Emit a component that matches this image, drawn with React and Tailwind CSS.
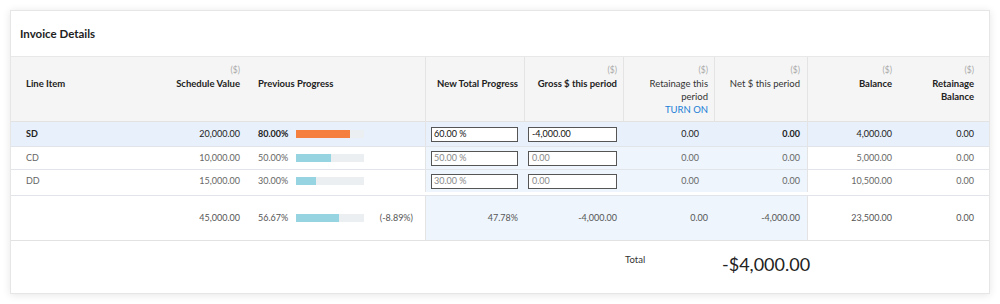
import React from 'react';

const cols = 'grid grid-cols-[139px_98px_177px_99px_99px_91px_93px_93px_89px]';

const rows = [
    { name: 'SD', value: '20,000.00', prev: '80.00%', pct: 80, bar: 'bg-[#f57f3f]', ntp: '60.00 %', gross: '-4,000.00', ret: '0.00', net: '0.00', bal: '4,000.00', rb: '0.00', active: true, h: 'h-[25px]' },
    { name: 'CD', value: '10,000.00', prev: '50.00%', pct: 51, bar: 'bg-[#96d4e1]', ntp: '50.00 %', gross: '0.00', ret: '0.00', net: '0.00', bal: '5,000.00', rb: '0.00', h: 'h-[23px]' },
    { name: 'DD', value: '15,000.00', prev: '30.00%', pct: 30, bar: 'bg-[#96d4e1]', ntp: '30.00 %', gross: '0.00', ret: '0.00', net: '0.00', bal: '10,500.00', rb: '0.00', h: 'h-[26px] pb-[3px]' },
];

const Dollar = () => <div className="text-[8.5px] font-normal text-[#a9a9a9]">($)</div>;

const Bar = ({ pct, color }) => (
    <div className="w-[68px] h-[8px] bg-[#eceff2]">
        <div className={`h-full ${color}`} style={{ width: `${pct}%` }} />
    </div>
);

const HeaderRow = () => (
    <div className={`${cols} h-[65px] bg-[#f5f5f5] border-b border-[#e2e2e2] text-[9.5px] font-bold text-[#222] leading-[13px]`}>
        <div className="pl-[15px] pt-[7px]">
            <div>&nbsp;</div>
            <div>Line Item</div>
        </div>
        <div className="pr-[8px] pt-[7px] text-right">
            <Dollar />
            <div>Schedule Value</div>
        </div>
        <div className="pl-[10px] pt-[7px]">
            <div>&nbsp;</div>
            <div>Previous Progress</div>
        </div>
        <div className="border-l border-[#e4e4e4] pr-[6px] pt-[7px] text-right">
            <div>&nbsp;</div>
            <div>New Total Progress</div>
        </div>
        <div className="border-l border-[#e4e4e4] pr-[6px] pt-[7px] text-right">
            <Dollar />
            <div>Gross $ this period</div>
        </div>
        <div className="border-l border-[#e4e4e4] pr-[6px] pt-[7px] text-right font-normal text-[#333]">
            <Dollar />
            <div>Retainage this</div>
            <div>period</div>
            <div className="text-[#1b7fd6]">TURN ON</div>
        </div>
        <div className="border-l border-[#e4e4e4] pr-[7px] pt-[7px] text-right font-normal text-[#333]">
            <Dollar />
            <div>Net $ this period</div>
        </div>
        <div className="border-l border-[#e4e4e4] pr-[8px] pt-[7px] text-right">
            <Dollar />
            <div>Balance</div>
        </div>
        <div className="pr-[15px] pt-[7px] text-right">
            <Dollar />
            <div>Retainage</div>
            <div>Balance</div>
        </div>
    </div>
);

const BodyRow = ({ r }) => {
    const rowBg = r.active ? 'bg-[#e7f0fb]' : 'bg-white';
    const midBg = r.active ? 'bg-[#e7f0fb]' : 'bg-[#eef5fd]';
    const txt = r.active ? 'text-[#222]' : 'text-[#666]';
    return (
        <div className={`${cols} ${r.h} ${rowBg} ${txt} border-b border-[#e1e5ea] text-[9px]`}>
            <div className={`pl-[15px] flex items-center ${r.active ? 'font-bold' : ''}`}>{r.name}</div>
            <div className="pr-[8px] flex items-center justify-end">{r.value}</div>
            <div className="pl-[10px] flex items-center">
                <span className={`w-[38px] ${r.active ? 'font-bold' : ''}`}>{r.prev}</span>
                <Bar pct={r.pct} color={r.bar} />
            </div>
            <div className={`${midBg} border-l border-[#e4e4e4] pl-[5px] flex items-center`}>
                <div className={`w-[87px] h-[15px] border border-[#555] bg-white px-[2px] flex items-center ${r.active ? 'text-[#111]' : 'text-[#888]'}`}>{r.ntp}</div>
            </div>
            <div className={`${midBg} pl-[4px] flex items-center`}>
                <div className={`w-[89px] h-[15px] border border-[#555] bg-white px-[3px] flex items-center ${r.active ? 'text-[#111]' : 'text-[#888]'}`}>{r.gross}</div>
            </div>
            <div className={`${midBg} pr-[15px] flex items-center justify-end`}>{r.ret}</div>
            <div className={`${midBg} pr-[7px] flex items-center justify-end ${r.active ? 'font-bold' : ''}`}>{r.net}</div>
            <div className="border-l border-[#e4e4e4] pr-[8px] flex items-center justify-end">{r.bal}</div>
            <div className="pr-[15px] flex items-center justify-end">{r.rb}</div>
        </div>
    );
};

const TotalsRow = () => (
    <div className={`${cols} h-[45px] border-b border-[#e2e2e2] text-[9px] text-[#555]`}>
        <div />
        <div className="pr-[8px] flex items-center justify-end">45,000.00</div>
        <div className="pl-[10px] pr-[12px] flex items-center">
            <span className="w-[38px]">56.67%</span>
            <Bar pct={63} color="bg-[#96d4e1]" />
            <span className="ml-auto">(-8.89%)</span>
        </div>
        <div className="bg-[#eef5fd] border-l border-[#e4e4e4] pr-[6px] flex items-center justify-end">47.78%</div>
        <div className="bg-[#eef5fd] pr-[6px] flex items-center justify-end">-4,000.00</div>
        <div className="bg-[#eef5fd] pr-[6px] flex items-center justify-end">0.00</div>
        <div className="bg-[#eef5fd] pr-[7px] flex items-center justify-end">-4,000.00</div>
        <div className="border-l border-[#e4e4e4] pr-[8px] flex items-center justify-end">23,500.00</div>
        <div className="pr-[15px] flex items-center justify-end">0.00</div>
    </div>
);

const App = () => {
    return (
        <div className="w-[1000px] h-[304px] bg-white pt-[10px] pl-[10px]" style={{ fontFamily: 'Lato, "Open Sans", sans-serif' }}>
            <div className="w-[980px] h-[284px] border border-[#e6e6e6] bg-white shadow-[0_1px_8px_rgba(0,0,0,0.10)]">
                {/* Title */}
                <div className="h-[46px] pl-[9px] flex items-center border-b border-[#e8e8e8]">
                    <p className="text-[11.5px] font-bold text-[#222]">Invoice Details</p>
                </div>

                <HeaderRow />
                {rows.map((r) => <BodyRow key={r.name} r={r} />)}
                <TotalsRow />

                {/* Footer total */}
                <div className={`${cols} h-[51px]`}>
                    <div className="col-span-5" />
                    <div className="pl-[2px] pt-[12px] text-[9.5px] text-[#333]">Total</div>
                    <div className="col-span-3 pl-[8px] pt-[10px] text-[18px] text-[#222] leading-[26px]">-$4,000.00</div>
                </div>
            </div>
        </div>
    );
};

export default App;
